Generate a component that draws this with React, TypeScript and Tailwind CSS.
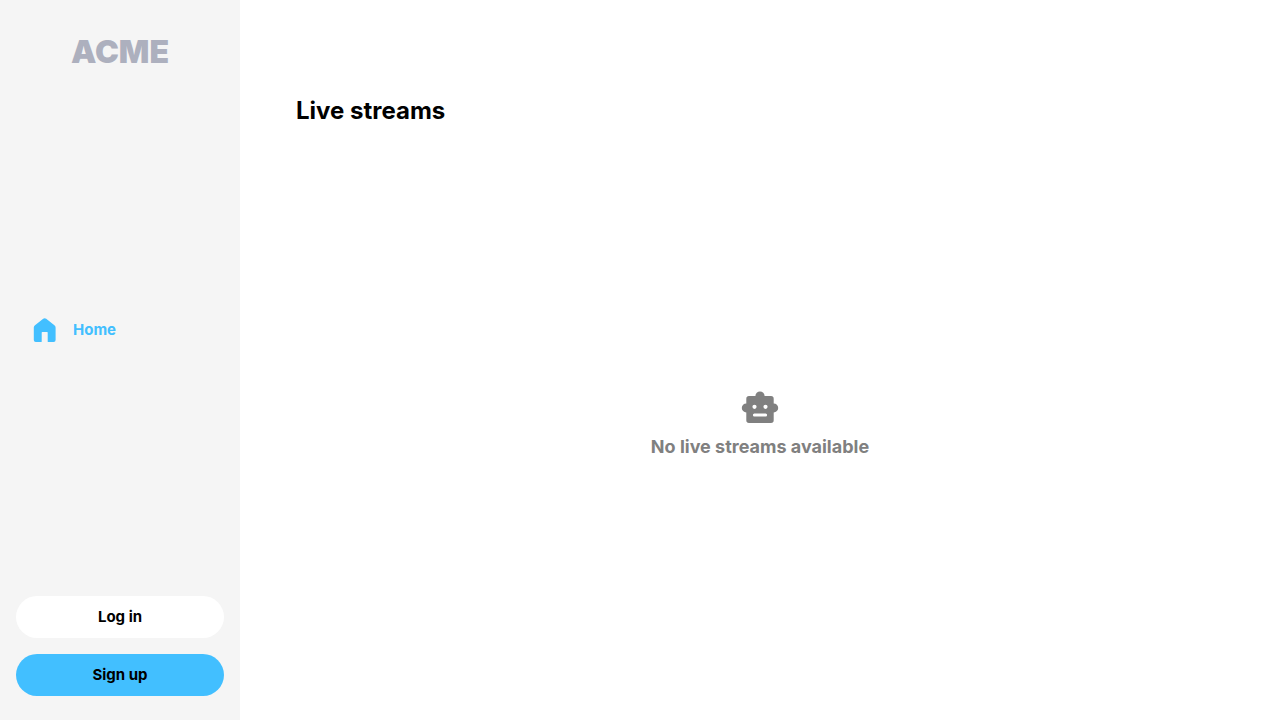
import React from "react";

function HomeIcon() {
  return (
    <svg className="h-6 w-6" viewBox="0 0 24 24" fill="currentColor" aria-hidden="true">
      <path d="M2 7.200 10.200.8a2.400 2.400 0 0 1 3 0l8.200 6.400a3 3 0 0 1 1.200 2.400V22a2 2 0 0 1-2 2h-5.300a.6.6 0 0 1-.6-.6V14.600a.6.6 0 0 0-.6-.6H9.300a.6.6 0 0 0-.6.6v8.800a.6.6 0 0 1-.6.6H2.800a2 2 0 0 1-2-2V9.600A3 3 0 0 1 2 7.200Z" />
    </svg>
  );
}

function RobotIcon() {
  return (
    <svg className="h-10 w-10" viewBox="0 0 40 40" fill="currentColor" aria-hidden="true">
      <path
        fillRule="evenodd"
        d="M15.400 11a4.600 4.600 0 0 1 9.200 0H31a2.700 2.700 0 0 1 2.700 2.700v4.700a4.500 4.500 0 0 1 0 9V35.300a2.700 2.700 0 0 1-2.700 2.700H9a2.700 2.700 0 0 1-2.700-2.700v-7.900a4.500 4.500 0 0 1 0-9v-4.700A2.700 2.700 0 0 1 9 11Zm-.9 8.700a2.100 2.100 0 1 0 0 4.200 2.100 2.100 0 0 0 0-4.200Zm11 0a2.100 2.100 0 1 0 0 4.200 2.100 2.100 0 0 0 0-4.200ZM14.400 28.400a1.500 1.500 0 0 0 0 3h11.200a1.500 1.500 0 0 0 0-3Z"
      />
    </svg>
  );
}

export default function App() {
  return (
    <div className="flex min-h-screen bg-white font-['Inter',sans-serif] text-black">
      <aside className="flex w-60 shrink-0 flex-col justify-between bg-[#f5f5f5] px-4 pt-10 pb-6">
        <a href="#" className="self-center text-[32px] leading-6 font-black text-[#adb0be]">ACME</a>
        <nav>
          <a href="#" className="flex h-12 items-center gap-4 pl-[17px] text-[15px] font-bold text-[#42bfff]">
            <HomeIcon />
            Home
          </a>
        </nav>
        <div className="flex flex-col gap-4">
          <button className="h-[42px] rounded-full bg-white text-[15px] font-bold">Log in</button>
          <button className="h-[42px] rounded-full bg-[#42bfff] text-[15px] font-bold">Sign up</button>
        </div>
      </aside>
      <main className="flex min-w-0 flex-1 flex-col px-14 pt-24">
        <h1 className="text-2xl leading-[30px] font-bold">Live streams</h1>
        <div className="flex flex-1 flex-col items-center justify-center gap-2 text-[#808080]">
          <RobotIcon />
          <p className="text-lg font-bold">No live streams available</p>
        </div>
      </main>
    </div>
  );
}
